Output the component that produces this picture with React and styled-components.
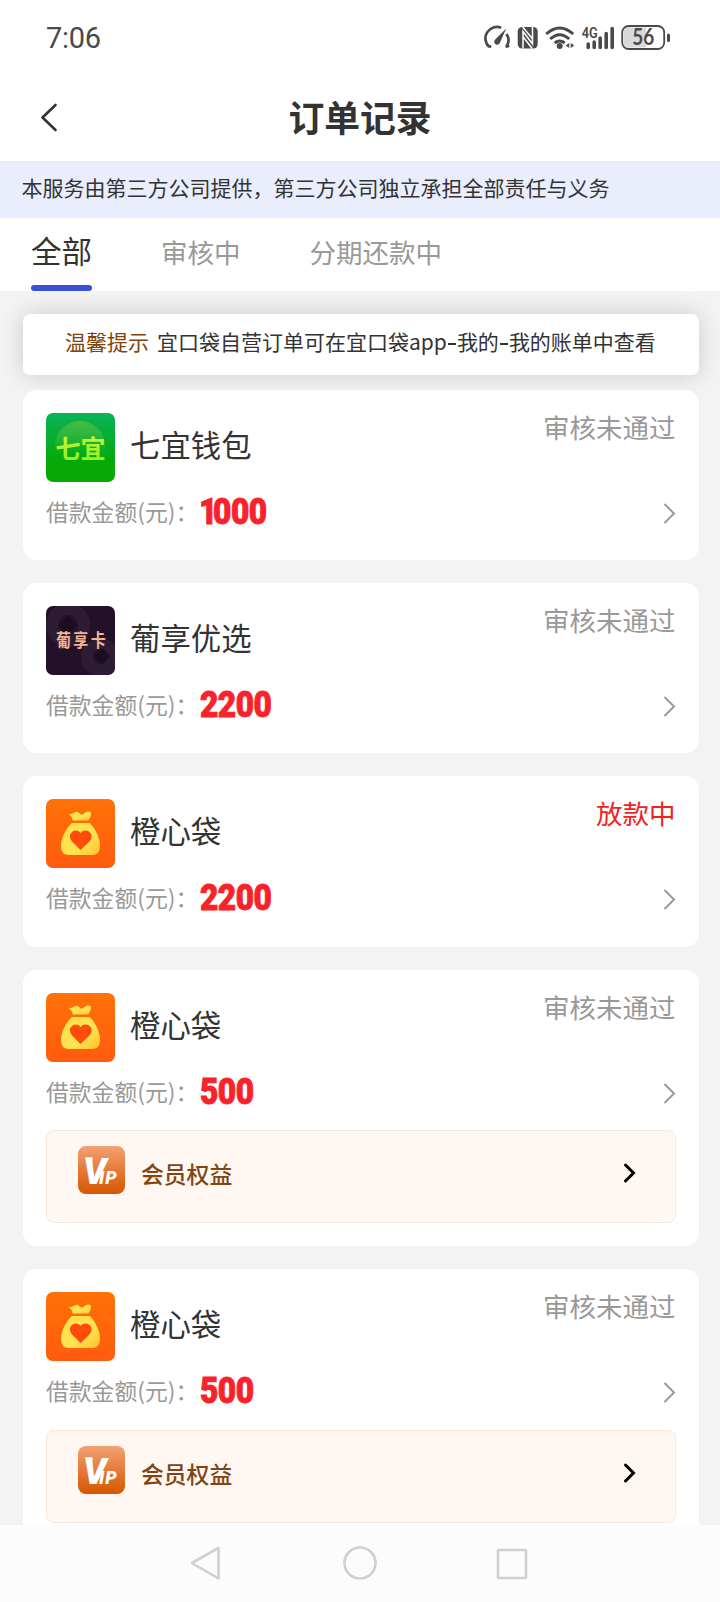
import React from "react";
import styled, { createGlobalStyle } from "styled-components";

const GlobalStyle = createGlobalStyle`
  * { box-sizing: border-box; }
  body {
    margin: 0;
    background: #f3f3f3;
    font-family: "Noto Sans CJK SC", "Noto Sans", sans-serif;
    color: #333;
  }
`;

const Screen = styled.div`
  width: 720px;
  height: 1602px;
  display: flex;
  flex-direction: column;
  overflow: hidden;
  background: #f3f3f3;
  white-space: nowrap;
`;

const StatusBar = styled.div`
  height: 75px;
  flex: none;
  display: flex;
  align-items: center;
  justify-content: space-between;
  padding: 0 48px 0 46px;
  background: #fff;
`;

const Clock = styled.span`
  font: 400 29px/30px Roboto, sans-serif;
  color: #4a4a4a;
  letter-spacing: -0.3px;
`;

const StatusIcons = styled.svg`
  width: 188px;
  height: 32px;
  display: block;
  color: #4a4a4a;
`;

const Header = styled.header`
  height: 86px;
  flex: none;
  display: grid;
  grid-template-columns: 80px 1fr 80px;
  align-items: center;
  background: #fff;
`;

const BackButton = styled.button`
  display: flex;
  padding: 0 0 0 40px;
  border: 0;
  background: none;
  color: #333;
`;

const Title = styled.h1`
  margin: 0 0 5px;
  text-align: center;
  font-size: 35.8px;
  line-height: 44px;
  font-weight: 700;
`;

const Notice = styled.div`
  height: 57px;
  flex: none;
  padding: 0 21.5px;
  background: #eaedfc;
  font-size: 21px;
  line-height: 52px;
`;

const Tabs = styled.nav`
  height: 73px;
  flex: none;
  display: flex;
  gap: 69px;
  padding-left: 31px;
  background: #fff;
`;

const Tab = styled.span`
  height: 73px;
  display: flex;
  flex-direction: column;
  justify-content: space-between;
  font-size: ${(p) => (p.$active ? 30.5 : 26.5)}px;
  line-height: ${(p) => (p.$active ? 65 : 68)}px;
  color: ${(p) => (p.$active ? "#333" : "#999")};

  &::after {
    content: "";
    height: 6px;
    flex: none;
    border-radius: 3px;
    background: ${(p) => (p.$active ? "#3a50d6" : "transparent")};
  }
`;

const Content = styled.main`
  flex: 1;
  min-height: 0;
  overflow: hidden;
  padding: 22.7px 21px 0 23px;
`;

const Tip = styled.div`
  height: 61.3px;
  display: flex;
  align-items: center;
  gap: 8px;
  padding: 0 42px 6px;
  margin-bottom: 15px;
  border-radius: 7px;
  background: #fff;
  box-shadow: 0 0 23px rgba(0, 0, 0, 0.17);
  font-size: 21px;
`;

const TipLabel = styled.span`
  color: #81430b;
`;

const Dash = styled.span`
  display: inline-block;
  width: 8px;
  height: 2px;
  margin: 0 1px;
  vertical-align: 5px;
  background: #333;
`;

const Card = styled.article`
  padding: 23px 23px ${(p) => (p.$member ? 23.6 : 16.2)}px;
  margin-bottom: 23px;
  border-radius: 14px;
  background: #fff;
`;

const CardTop = styled.div`
  height: 69px;
  display: flex;
`;

const LogoTile = styled.svg`
  width: 69px;
  height: 69px;
  flex: none;
  border-radius: 7px;
`;

const Name = styled.h2`
  flex: 1;
  margin: 0 0 0 15px;
  font-size: 30.4px;
  line-height: 63px;
  font-weight: 400;
`;

const State = styled.span`
  margin-right: 0.6px;
  font-size: 26.5px;
  line-height: 28px;
  color: ${(p) => (p.$hot ? "#f22222" : "#999")};
`;

const AmountRow = styled.div`
  height: 62px;
  display: flex;
  align-items: center;
`;

const AmountLabel = styled.span`
  width: 154px;
  padding-bottom: 2px;
  font-size: 22.8px;
  line-height: 30px;
  color: #999;
`;

const Amount = styled.strong`
  flex: 1;
  font: 900 36px/40px Roboto, sans-serif;
  letter-spacing: -0.6px;
  color: #f9222b;
  -webkit-text-stroke: 0.9px #f9222b;
  transform: translateY(-1px) scaleX(0.88);
  transform-origin: 0 50%;
`;

const NarrowDigit = styled.span`
  margin-left: -1px;
  letter-spacing: -5px;
`;

const MemberBox = styled.div`
  height: 93px;
  display: flex;
  align-items: center;
  margin-top: 6.2px;
  padding: 0 39px 0 31px;
  border: 1px solid #fbe7d8;
  border-radius: 8px;
  background: #fef7f2;
`;

const VipBadge = styled.svg`
  width: 47px;
  height: 48px;
  margin-bottom: 13px;
`;

const MemberText = styled.span`
  flex: 1;
  margin: 0 0 5px 16px;
  font-size: 22.8px;
  font-weight: 500;
  line-height: 30px;
  color: #814513;
`;

const MemberArrow = styled.svg`
  width: 14px;
  height: 22px;
  margin-bottom: 6px;
`;

const NavBar = styled.footer`
  height: 77px;
  flex: none;
  display: flex;
  align-items: center;
  justify-content: center;
  gap: 118px;
  background: #fcfcfc;
`;

const NavIcon = styled.svg`
  width: 34px;
  height: 36px;
  fill: none;
  stroke: #d0d0d0;
  stroke-width: 2.6;
  stroke-linejoin: round;
`;

const QiyiLogo = () => (
  <LogoTile viewBox="0 0 69 69">
    <defs>
      <linearGradient id="qiyiBg" x2="0" y2="1">
        <stop stopColor="#08b458" />
        <stop offset="0.7" stopColor="#05a908" />
        <stop offset="1" stopColor="#08a905" />
      </linearGradient>
      <linearGradient id="qiyiDisc" x2="0" y2="1">
        <stop stopColor="#48ba40" />
        <stop offset="0.65" stopColor="#48ba40" stopOpacity="0" />
      </linearGradient>
      <linearGradient id="qiyiText" x2="0" y2="1">
        <stop stopColor="#d8f43c" />
        <stop offset="1" stopColor="#8cf01e" />
      </linearGradient>
    </defs>
    <rect width="69" height="69" fill="url(#qiyiBg)" />
    <circle cx="34" cy="33" r="25" fill="url(#qiyiDisc)" />
    <text x="9.5" y="45" fontSize="25" fontWeight="700" textLength="50" fill="url(#qiyiText)">七宜</text>
  </LogoTile>
);

const PuxiangLogo = () => (
  <LogoTile viewBox="0 0 69 69">
    <rect width="69" height="69" fill="#23112a" />
    <g fill="none" stroke="#2e1b34" strokeWidth="12">
      <circle cx="22" cy="19" r="16" />
      <circle cx="54" cy="51" r="13" />
    </g>
    <path d="M22 10l9 9-9 9-9-9zM56 42l8 8-8 8-8-8z" fill="#1a0d22" />
    <text x="10" y="41" fontSize="15" fontWeight="700" letterSpacing="2.400" transform="matrix(1 0 0 1.18 0 -7.4)" fill="#f0b48e">葡享卡</text>
  </LogoTile>
);

const BagLogo = () => (
  <LogoTile viewBox="0 0 69 69">
    <defs>
      <linearGradient id="bagBg" x2="0" y2="1">
        <stop stopColor="#ff7208" />
        <stop offset="1" stopColor="#ff5b0f" />
      </linearGradient>
      <linearGradient id="bagFill" x1="0" y1="0" x2="1" y2="1">
        <stop stopColor="#ffe04a" />
        <stop offset="0.6" stopColor="#ffe350" />
        <stop offset="1" stopColor="#ffc02c" />
      </linearGradient>
    </defs>
    <rect width="69" height="69" fill="url(#bagBg)" />
    <g fill="url(#bagFill)">
      <path d="M26.500 21.500Q27 18.500 23 15.200Q27 15 29.500 13Q32 12 33.500 14.500Q35.500 16.500 38 14.500Q41.500 11 45 13.500Q45.500 17 42.500 21.500z" />
      <path d="M26 24H43.500C48.500 28 54 38 54 47Q54 56 46 56H23Q15 56 15 47C15 38 21 28 26 24z" />
    </g>
    <path d="M34.500 51L26 42.500Q21.500 36.500 26.500 32.500Q31.500 30 34.500 34Q38 30 43 32.500Q48 36.500 43.500 42.500z" fill="#ff4b0b" />
  </LogoTile>
);

const logos = { qiyi: QiyiLogo, puxiang: PuxiangLogo, bag: BagLogo };

const Chevron = () => (
  <svg width="13" height="22" viewBox="0 0 13 22" fill="none" stroke="#999" strokeWidth="2">
    <path d="M1.500 2L11 11.500L1.500 21" />
  </svg>
);

const MemberBenefits = () => (
  <MemberBox>
    <VipBadge viewBox="0 0 47 48">
      <defs>
        <linearGradient id="vipBg" x2="0" y2="1">
          <stop stopColor="#f2a273" />
          <stop offset="0.5" stopColor="#e57a3a" />
          <stop offset="1" stopColor="#d65600" />
        </linearGradient>
      </defs>
      <rect width="47" height="48" rx="8" fill="url(#vipBg)" />
      <path d="M7 11.300H14.500V14.500H9z" fill="#fff" />
      <text y="37.500" fill="#fff" fontFamily="Roboto, sans-serif" fontWeight="900" fontStyle="italic">
        <tspan x="5" fontSize="36.500" letterSpacing="-7.500">V</tspan>
        <tspan fontSize="18" letterSpacing="1">I</tspan>
        <tspan fontSize="18">P</tspan>
      </text>
    </VipBadge>
    <MemberText>会员权益</MemberText>
    <MemberArrow viewBox="0 0 14 22" fill="none" stroke="#000" strokeWidth="3" strokeLinecap="round">
      <path d="M3.500 3L11.500 11L3.500 19" />
    </MemberArrow>
  </MemberBox>
);

const orders = [
  { logo: "qiyi", name: "七宜钱包", state: "审核未通过", amount: "1000" },
  { logo: "puxiang", name: "葡享优选", state: "审核未通过", amount: "2200" },
  { logo: "bag", name: "橙心袋", state: "放款中", hot: true, amount: "2200" },
  { logo: "bag", name: "橙心袋", state: "审核未通过", amount: "500", member: true },
  { logo: "bag", name: "橙心袋", state: "审核未通过", amount: "500", member: true },
];

const OrderCard = ({ order }) => {
  const Logo = logos[order.logo];
  return (
    <Card $member={order.member}>
      <CardTop>
        <Logo />
        <Name>{order.name}</Name>
        <State $hot={order.hot}>{order.state}</State>
      </CardTop>
      <AmountRow>
        <AmountLabel>借款金额(元)：</AmountLabel>
        <Amount>
          {[...order.amount].map((d, i) => (d === "1" ? <NarrowDigit key={i}>{d}</NarrowDigit> : d))}
        </Amount>
        <Chevron />
      </AmountRow>
      {order.member && <MemberBenefits />}
    </Card>
  );
};

const SystemIcons = () => (
  <StatusIcons viewBox="484.3 21.5 188 32" fill="none" stroke="currentColor">
    <path d="M489.500 46.500A11.500 11.500 0 0 1 501.500 27.300M506.800 33.500A11.500 11.500 0 0 1 506.500 46.500M488 45l3.500 1.500M509.500 45l-3.500 1.500" strokeWidth="2.700" />
    <path d="M506.500 28L500.500 41.500A3 3 0 1 1 495.500 39z" fill="currentColor" stroke="none" />
    <rect x="518" y="26.500" width="20" height="21.500" rx="4.500" fill="currentColor" stroke="none" />
    <path d="M523.300 48V31L532.800 43.500V26.500M523 26.500L532.500 38M523.500 36.500L532.500 48" stroke="#fff" strokeWidth="1.500" />
    <g strokeWidth="3">
      <path d="M546.500 33.500Q560 21.500 573.500 33.500" />
      <path d="M550.500 38.500Q560 30 569.500 38.500" />
      <path d="M555 42.500Q560 38.500 565 42.500" />
    </g>
    <circle cx="560" cy="45.500" r="3" fill="currentColor" stroke="none" />
    <path d="M569.500 42.500v5l-3.500-2.500zM571 42.500v5l3.500-2.500z" fill="currentColor" stroke="none" />
    <text x="582" y="37" fontSize="14.500" fontFamily="Roboto, sans-serif" fontWeight="600" textLength="16" lengthAdjust="spacingAndGlyphs" fill="currentColor" stroke="none">4G</text>
    <path d="M588.500 43.500V47M594.500 41.500V47M600.500 37.500V47M606.500 33V47M612.500 28V47" strokeWidth="3.600" strokeLinecap="round" />
    <path d="M629 27H646.500V47H629Q624 47 624 42V32Q624 27 629 27z" fill="#d9d9d9" stroke="none" />
    <rect x="622.500" y="25.500" width="42" height="23" rx="6.500" strokeWidth="1.800" />
    <path d="M668.800 34.500V40" strokeWidth="3" strokeLinecap="round" />
    <text x="643.500" y="44.800" textAnchor="middle" fontSize="22" fontFamily="Lato, sans-serif" fontWeight="700" textLength="22" lengthAdjust="spacingAndGlyphs" fill="currentColor" stroke="none">56</text>
  </StatusIcons>
);

export default function App() {
  return (
    <Screen>
      <GlobalStyle />
      <StatusBar>
        <Clock>7:06</Clock>
        <SystemIcons />
      </StatusBar>
      <Header>
        <BackButton aria-label="返回">
          <svg width="18" height="30" viewBox="0 0 18 30" fill="none" stroke="currentColor" strokeWidth="2.6" strokeLinecap="round" strokeLinejoin="round">
            <path d="M15.500 2L2.500 14.500L15.500 27" />
          </svg>
        </BackButton>
        <Title>订单记录</Title>
      </Header>
      <Notice>本服务由第三方公司提供，第三方公司独立承担全部责任与义务</Notice>
      <Tabs>
        <Tab $active>全部</Tab>
        <Tab>审核中</Tab>
        <Tab>分期还款中</Tab>
      </Tabs>
      <Content>
        <Tip>
          <TipLabel>温馨提示</TipLabel>
          <span>宜口袋自营订单可在宜口袋app<Dash />我的<Dash />我的账单中查看</span>
        </Tip>
        {orders.map((order, i) => (
          <OrderCard key={i} order={order} />
        ))}
      </Content>
      <NavBar>
        <NavIcon viewBox="0 0 34 36">
          <path d="M27.500 2V32.500L.8 17z" />
        </NavIcon>
        <NavIcon viewBox="0 0 34 36">
          <circle cx="17" cy="17" r="15.500" />
        </NavIcon>
        <NavIcon viewBox="0 0 34 36">
          <rect x="3" y="4" width="28" height="28" rx="1" />
        </NavIcon>
      </NavBar>
    </Screen>
  );
}
